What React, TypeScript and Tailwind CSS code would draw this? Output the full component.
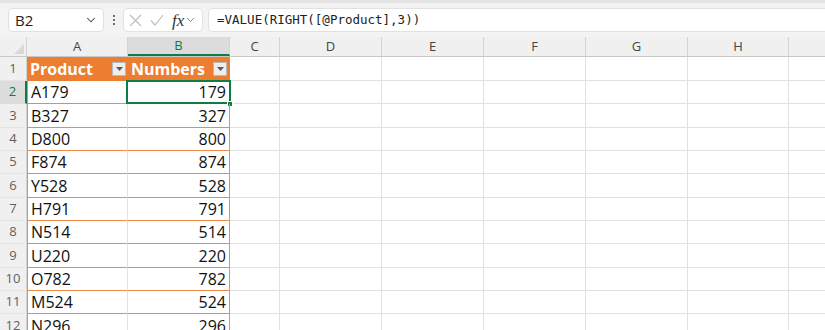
import { ChevronDown } from 'lucide-react';

const cols = [
  { id: 'A', w: 101 },
  { id: 'B', w: 102 },
  { id: 'C', w: 50 },
  { id: 'D', w: 102 },
  { id: 'E', w: 102 },
  { id: 'F', w: 102 },
  { id: 'G', w: 102 },
  { id: 'H', w: 101 },
  { id: '', w: 60 },
];

const data = ['A179', 'B327', 'D800', 'F874', 'Y528', 'H791', 'N514', 'U220', 'O782', 'M524', 'N296'];

const cellFont = { fontFamily: '"Open Sans", "Liberation Sans", sans-serif' };

// rows are ~23.33px tall; alternate whole pixels so borders stay crisp
const rowH = (i: number) => (i % 3 === 1 ? 'h-[24px]' : 'h-[23px]');

function FilterButton() {
  return (
    <div className="w-[14px] h-[14px] bg-[#eeeeee] border border-[#b9b9b9] flex items-center justify-center shrink-0">
      <svg width="7" height="4" viewBox="0 0 7 4">
        <path d="M0 0h7L3.5 4z" fill="#5a5a5a" />
      </svg>
    </div>
  );
}

function FormulaBar() {
  return (
    <div className="h-[37px] bg-[#f3f3f3] border-t-[3px] border-[#e4e4e4] flex items-center pl-[8px] gap-[5px]">
      <div className="w-[96px] h-[24px] bg-white border border-[#e1e1e1] rounded-[5px] flex items-center justify-between pl-[6px] pr-[5px]">
        <span className="text-[15px] text-[#222]" style={cellFont}>B2</span>
        <ChevronDown size={14} strokeWidth={1.8} className="text-[#444]" />
      </div>
      <div className="w-[9px] flex flex-col items-center gap-[2px]">
        <span className="w-[2px] h-[2px] bg-[#444] rounded-full" />
        <span className="w-[2px] h-[2px] bg-[#444] rounded-full" />
        <span className="w-[2px] h-[2px] bg-[#444] rounded-full" />
      </div>
      <div className="w-[80px] h-[24px] bg-white border border-[#e1e1e1] rounded-[5px] flex items-center pl-[5px] gap-[8px]">
        <svg width="13" height="13" viewBox="0 0 13 13">
          <path d="M1 1l11 11M12 1L1 12" stroke="#bdbdbd" strokeWidth="1.2" fill="none" />
        </svg>
        <svg width="14" height="12" viewBox="0 0 14 12">
          <path d="M1 6.5l4 4.5L13 1" stroke="#bdbdbd" strokeWidth="1.2" fill="none" />
        </svg>
        <div className="flex items-center gap-[2px]">
          <span className="italic text-[17px] text-[#333] leading-none" style={{ fontFamily: '"Liberation Serif", serif' }}>fx</span>
          <svg width="9" height="6" viewBox="0 0 9 6">
            <path d="M1 1l3.5 3.5L8 1" stroke="#888" strokeWidth="1" fill="none" />
          </svg>
        </div>
      </div>
      <div className="flex-1 h-[24px] bg-white border border-[#e1e1e1] border-r-0 rounded-l-[5px] flex items-center pl-[8px]">
        <span className="text-[12.5px] text-[#222]" style={{ fontFamily: '"DejaVu Sans Mono", monospace' }}>
          =VALUE(RIGHT([@Product],3))
        </span>
      </div>
    </div>
  );
}

function ColumnHeaders() {
  return (
    <div className="flex h-[20px] bg-[#f0f0f0] border-b border-[#c8c8c8]">
      <div className="w-[27px] shrink-0 border-r border-[#d4d4d4] relative">
        <svg className="absolute right-[2px] bottom-[2px]" width="10" height="10" viewBox="0 0 10 10">
          <path d="M10 0v10H0z" fill="#d9d9d9" />
        </svg>
      </div>
      {cols.map(c => (
        <div
          key={c.id || 'x'}
          style={{ width: c.w }}
          className={
            c.id === 'B'
              ? 'shrink-0 bg-[#dcdcdc] border-r border-[#d4d4d4] border-b-2 border-b-[#107c41] flex items-center justify-center text-[13px] text-[#107c41]'
              : 'shrink-0 border-r border-[#d4d4d4] flex items-center justify-center text-[13px] text-[#444]'
          }
        >
          <span style={cellFont}>{c.id}</span>
        </div>
      ))}
    </div>
  );
}

function RowHeader({ n, active }: { n: number; active?: boolean }) {
  return (
    <div
      className={
        active
          ? 'w-[27px] shrink-0 bg-[#dcdcdc] border-r-2 border-[#107c41] border-b border-b-[#dcdcdc] flex items-center justify-center text-[13px] text-[#107c41]'
          : 'w-[27px] shrink-0 bg-[#f0f0f0] border-r border-[#d4d4d4] border-b border-b-[#e4e4e4] flex items-center justify-center text-[13px] text-[#616161]'
      }
    >
      <span style={cellFont}>{n}</span>
    </div>
  );
}

function EmptyCells() {
  return (
    <>
      {cols.slice(2).map(c => (
        <div key={c.id || 'x'} style={{ width: c.w }} className="shrink-0 border-r border-b border-[#e1e1e1]" />
      ))}
    </>
  );
}

export default function App() {
  return (
    <div className="w-[825px] h-[330px] overflow-hidden bg-white">
      <FormulaBar />
      <ColumnHeaders />
      <div className="flex h-[24px]">
        <RowHeader n={1} />
        <div className="w-[101px] shrink-0 bg-[#ed7d31] flex items-center justify-between pl-[3px] pr-[2px]">
          <span className="text-white font-bold text-[16px]" style={cellFont}>Product</span>
          <FilterButton />
        </div>
        <div className="w-[102px] shrink-0 bg-[#ed7d31] border-r border-[#ed7d31] flex items-center justify-between pl-[3px] pr-[2px]">
          <span className="text-white font-bold text-[16px]" style={cellFont}>Numbers</span>
          <FilterButton />
        </div>
        <EmptyCells />
      </div>
      {data.map((p, i) => {
        const row = i + 2;
        const active = row === 2;
        return (
          <div key={p} className={`flex ${rowH(i)}`}>
            <RowHeader n={row} active={active} />
            <div className="w-[101px] shrink-0 border-l border-[#ef8a4c] border-r border-r-[#e1e1e1] border-b border-b-[#ef8a4c] flex items-center pl-[3px] text-[16px] text-[#111]" style={cellFont}>
              {p}
            </div>
            <div className="w-[102px] shrink-0 relative border-r border-[#ef8a4c] border-b border-b-[#ef8a4c] flex items-center justify-end pr-[3px] text-[16px] text-[#111]" style={cellFont}>
              {p.slice(1)}
              {active && (
                <>
                  <div className="absolute -left-[2px] -top-[1px] -right-[2px] -bottom-[1px] border-2 border-[#107c41]" />
                  <div className="absolute -right-[4px] -bottom-[4px] w-[6px] h-[6px] bg-[#107c41] border border-white" />
                </>
              )}
            </div>
            <EmptyCells />
          </div>
        );
      })}
    </div>
  );
}
